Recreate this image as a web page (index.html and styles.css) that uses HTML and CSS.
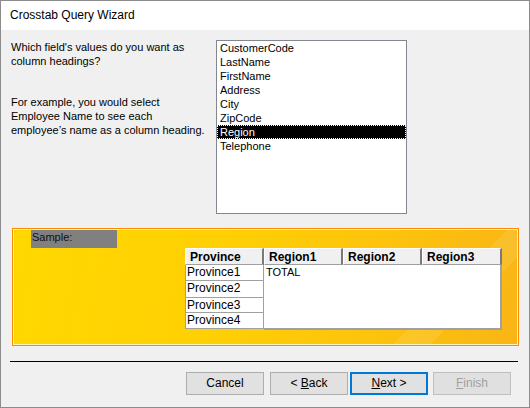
FILE: index.html
```html
<!DOCTYPE html>
<html>
<head>
<meta charset="utf-8">
<link rel="stylesheet" href="styles.css">
</head>
<body>
<div class="window">
  <div class="titlebar">Crosstab Query Wizard</div>
  <div class="top">
    <div class="desc">
      <p class="q">Which field's values do you want as<br>column headings?</p>
      <p class="ex">For example, you would select<br>Employee Name to see each<br>employee’s name as a column heading.</p>
    </div>
    <div class="listbox">
      <div class="item">CustomerCode</div>
      <div class="item">LastName</div>
      <div class="item">FirstName</div>
      <div class="item">Address</div>
      <div class="item">City</div>
      <div class="item">ZipCode</div>
      <div class="item sel">Region</div>
      <div class="item">Telephone</div>
    </div>
  </div>
  <div class="panel">
    <div class="panel-in">
      <div class="sample">Sample:</div>
      <div class="tbl">
        <div class="hrow">
          <div class="hcell">Province</div>
          <div class="hcell">Region1</div>
          <div class="hcell">Region2</div>
          <div class="hcell">Region3</div>
        </div>
        <div class="brow">
          <div class="pcol">
            <div class="pcell h16">Province1</div>
            <div class="pcell h17">Province2</div>
            <div class="pcell h15">Province3</div>
            <div class="pcell h16 last">Province4</div>
          </div>
          <div class="rbody">TOTAL</div>
        </div>
      </div>
    </div>
  </div>
  <div class="sep"></div>
  <div class="buttons">
    <div class="btn">Cancel</div>
    <div class="btn">&lt; <u>B</u>ack</div>
    <div class="btn def"><u>N</u>ext &gt;</div>
    <div class="btn dis"><u>F</u>inish</div>
  </div>
</div>
</body>
</html>
```
FILE: styles.css
```css
* { box-sizing: border-box; }
html, body { margin: 0; padding: 0; background: #f0f0f0; }
body { font-family: "Liberation Sans", Arial, sans-serif; font-size: 11px; color: #000; }
.window {
  width: 530px; height: 408px;
  border: 1px solid #8c8c8c;
  background: #f0f0f0;
  overflow: hidden;
}
.titlebar {
  height: 29px; background: #fff;
  padding-left: 9px; line-height: 29px;
  font-size: 12px; color: #000;
}
.top { display: flex; padding-top: 10px; height: 198px; }
.desc { width: 215px; flex: none; padding-left: 10px; }
.desc p { margin: 0; line-height: 14px; }
.desc .ex { margin-top: 27px; }
.listbox {
  width: 191px; height: 174px; flex: none;
  background: #fff; border: 1px solid #828790;
}
.item { height: 14px; line-height: 14px; padding-left: 3px; white-space: nowrap; }
.item.sel { background: #000; color: #fff; outline: 1px dotted #fff; outline-offset: -1px; }
.panel {
  margin-left: 11px; width: 507px; height: 118px;
  border: 1px solid #ff8a00;
  background: #fff3c0;
  padding: 1px;
}
.panel-in {
  height: 100%;
  background:
    linear-gradient(135deg, transparent 0 80%, rgba(255,255,255,0.10) 80% 86%, transparent 86%),
    linear-gradient(100deg, #ffd800 0%, #ffd004 40%, #fdc40c 70%, #f9b516 100%);
  padding-left: 17px;
}
.sample {
  width: 86px; height: 18px; background: #808080;
  line-height: 14px; padding-left: 1px; color: #111;
}
.tbl { margin-left: 154px; width: 317px; }
.hrow { display: flex; height: 17px; }
.hcell {
  width: 79px; height: 17px; background: #f0f0f0;
  font-weight: bold; font-size: 12px; line-height: 16px; padding-left: 4px;
  border-right: 2px solid #7a7a7a; border-bottom: 1px solid #a0a0a0;
  border-top: 1px solid #fff; border-left: 1px solid #fff;
}
.hcell:last-child { width: 80px; }
.brow { display: flex; }
.pcol { width: 79px; }
.pcell {
  background: #fff; border: 1px solid #a0a0a0; border-top: none;
  padding-left: 1px; font-size: 12px; line-height: 14px;
}
.h16 { height: 16px; } .h17 { height: 17px; } .h15 { height: 15px; }
.rbody {
  width: 238px; height: 65px; background: #fff;
  border-right: 2px solid #a0a0a0; border-bottom: 2px solid #a0a0a0;
  padding-left: 2px; line-height: 14px;
}
.sep { margin: 15px 0 0 9px; width: 508px; height: 1px; background: #000; }
.buttons { display: flex; padding-left: 185px; margin-top: 10px; }
.btn {
  width: 78px; height: 23px; background: #e1e1e1;
  border: 1px solid #adadad; text-align: center; line-height: 21px;
  font-size: 12px; margin-right: 6px;
}
.btn:nth-child(2) { margin-right: 2px; }
.btn:nth-child(3) { margin-right: 5px; }
.btn.def { border: 2px solid #0078d7; line-height: 19px; }
.btn.dis { color: #a0a0a0; border-color: #bfbfbf; background: #e0e0e0; }
.btn u { text-decoration: underline; }
```
